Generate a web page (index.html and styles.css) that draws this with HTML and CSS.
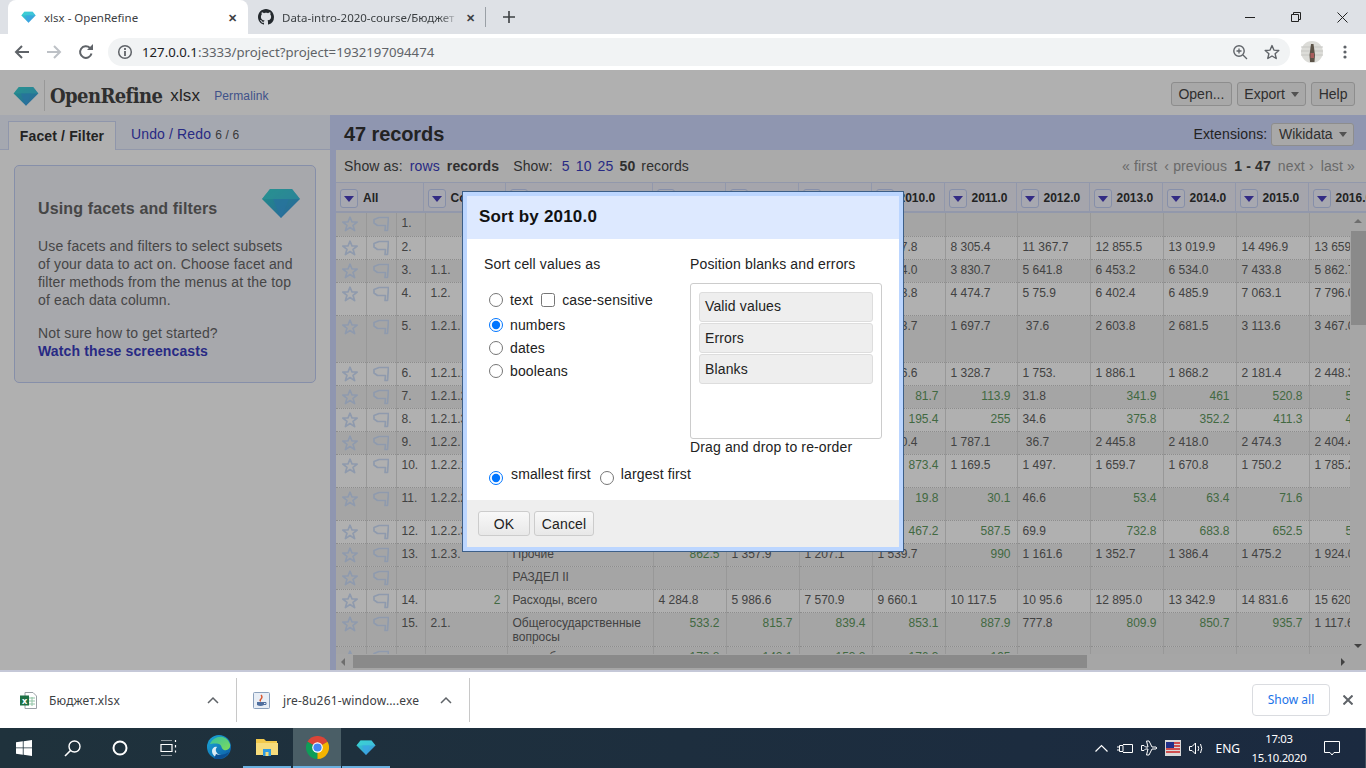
FILE: index.html
```html
<!DOCTYPE html>
<html lang="en">
<head>
    <meta charset="UTF-8">
    <meta name="viewport" content="width=device-width, initial-scale=1.0">
    <title>xlsx - OpenRefine</title>
    <link rel="stylesheet" href="styles.css">
</head>
<body>

<svg class="defs" aria-hidden="true">
    <defs>
        <linearGradient id="gem-a" x1="0" y1="0" x2="1" y2="1">
            <stop offset="0" stop-color="#2fd0c4"/>
            <stop offset="1" stop-color="#3f8fe6"/>
        </linearGradient>
        <symbol id="gem" viewBox="0 0 40 30">
            <path d="M9 1H31L39 11L20 30L1 11Z" fill="url(#gem-a)"/>
            <path d="M1 11H39L31 1H9Z" fill="#43d6dc" opacity=".55"/>
            <path d="M12 11H28L20 30Z" fill="#3aa5e6" opacity=".7"/>
        </symbol>
        <symbol id="star" viewBox="0 0 16 16">
            <path d="M8 1.200L10 6H15.200L11 9.300L12.600 14.600L8 11.500L3.400 14.600L5 9.300L.8 6H6Z" fill="none" stroke="#cfe0fb" stroke-width="1.700" stroke-linejoin="round"/>
        </symbol>
        <symbol id="flag" viewBox="0 0 16 16">
            <path d="M1 3.500L6 1.500H15.500L14.500 14.500H12L12.500 9.500H4.500L1 7Z" fill="none" stroke="#cfe0fb" stroke-width="1.700" stroke-linejoin="round"/>
        </symbol>
    </defs>
</svg>

<div class="tabstrip">
    <div class="tab active">
        <svg class="tab-icon" width="15" height="12"><use href="#gem"/></svg>
        <span class="tab-title">xlsx - OpenRefine</span>
        <span class="tab-close">✕</span>
    </div>
    <div class="tab">
        <svg class="tab-icon" width="16" height="16" viewBox="0 0 16 16"><path fill="#24292e" d="M8 0C3.58 0 0 3.58 0 8c0 3.54 2.29 6.53 5.47 7.59.4.07.55-.27.55-.38 0-.19-.01-.82-.01-1.49-2.01.37-2.53-.49-2.69-.94-.09-.23-.48-.94-.82-1.13-.28-.15-.68-.52-.01-.53.63-.01 1.08.58 1.23.82.72 1.21 1.87.87 2.33.66.07-.52.28-.87.51-1.07-1.78-.2-3.64-.89-3.64-3.95 0-.87.31-1.59.82-2.15-.08-.2-.36-1.02.08-2.12 0 0 .67-.21 2.2.82.64-.18 1.32-.27 2-.27.68 0 1.36.09 2 .27 1.53-1.04 2.2-.82 2.2-.82.44 1.1.16 1.92.08 2.12.51.56.82 1.27.82 2.15 0 3.07-1.87 3.75-3.65 3.95.29.25.54.73.54 1.48 0 1.07-.01 1.93-.01 2.2 0 .21.15.46.55.38A8.013 8.013 0 0016 8c0-4.42-3.58-8-8-8z"/></svg>
        <span class="tab-title fade">Data-intro-2020-course/Бюджет</span>
        <span class="tab-close">✕</span>
    </div>
    <span class="tab-sep"></span>
    <svg class="new-tab" width="12" height="12" viewBox="0 0 12 12"><path d="M6 0V12M0 6H12" stroke="#3c4043" stroke-width="1.6"/></svg>
    <div class="win-controls">
        <svg width="10" height="10" viewBox="0 0 10 10"><path d="M0 5.5H10" stroke="#222" stroke-width="1"/></svg>
        <svg width="10" height="10" viewBox="0 0 10 10"><path d="M.5 2.5H7.5V9.5H.5ZM2.5 2.5V.5H9.5V7.5H7.5" fill="none" stroke="#222"/></svg>
        <svg width="11" height="11" viewBox="0 0 11 11"><path d="M.5 .5L10.5 10.5M10.5 .5L.5 10.5" stroke="#222"/></svg>
    </div>
</div>

<div class="toolbar">
    <svg class="nav" width="16" height="16" viewBox="0 0 16 16"><path d="M15 8H2M8 2L2 8L8 14" fill="none" stroke="#5f6368" stroke-width="2"/></svg>
    <svg class="nav" width="16" height="16" viewBox="0 0 16 16"><path d="M1 8H14M8 2L14 8L8 14" fill="none" stroke="#bdc1c6" stroke-width="2"/></svg>
    <svg class="nav" width="16" height="16" viewBox="0 0 16 16"><path d="M13.5 9.5A5.8 5.8 0 1 1 12 4" fill="none" stroke="#5f6368" stroke-width="2"/><path d="M9 6H15V0Z" fill="#5f6368"/></svg>
    <div class="omnibox">
        <svg width="16" height="16" viewBox="0 0 16 16"><circle cx="8" cy="8" r="6.3" fill="none" stroke="#5f6368" stroke-width="1.5"/><path d="M8 7V12M8 4V6" stroke="#5f6368" stroke-width="1.8"/></svg>
        <span class="url"><span class="host">127.0.0.1</span>:3333/project?project=1932197094474</span>
        <svg class="omni-right" width="16" height="16" viewBox="0 0 16 16"><circle cx="7" cy="7" r="5.2" fill="none" stroke="#5f6368" stroke-width="1.4"/><path d="M11 11L15 15M7 4.5V9.5M4.5 7H9.5" stroke="#5f6368" stroke-width="1.3"/></svg>
        <svg width="16" height="16" viewBox="0 0 16 16"><path d="M8 1.6L9.9 6.1L14.8 6.5L11.1 9.7L12.2 14.5L8 12L3.8 14.5L4.9 9.7L1.2 6.5L6.1 6.1Z" fill="none" stroke="#5f6368" stroke-width="1.4" stroke-linejoin="round"/></svg>
    </div>
    <svg class="avatar" width="22" height="22" viewBox="0 0 22 22"><circle cx="11" cy="11" r="11" fill="#dcdcd8"/><path d="M0 6H22M0 10H22M0 14H22" stroke="#c6c6c2"/><path d="M10 3H12.500L14 14L13.500 21H9L8.500 14Z" fill="#5c5348"/><path d="M9.500 12H13V17H9.500Z" fill="#a85c5c"/></svg>
    <svg class="kebab" width="4" height="16" viewBox="0 0 4 16"><circle cx="2" cy="3" r="1.600" fill="#5f6368"/><circle cx="2" cy="8" r="1.600" fill="#5f6368"/><circle cx="2" cy="13" r="1.600" fill="#5f6368"/></svg>
</div>

<div class="app">
    <header class="app-header">
        <svg class="logo" width="26" height="20"><use href="#gem"/></svg>
        <span class="logo-sep"></span>
        <span class="logo-text">OpenRefine</span>
        <span class="project-name">xlsx</span>
        <a class="permalink">Permalink</a>
        <div class="header-buttons">
            <span class="btn">Open...</span>
            <span class="btn">Export <i class="caret"></i></span>
            <span class="btn">Help</span>
        </div>
    </header>

    <div class="workspace">
        <aside class="left-panel">
            <div class="left-tabs">
                <span class="left-tab">Facet / Filter</span>
                <a class="left-link">Undo / Redo <small>6 / 6</small></a>
            </div>
            <div class="left-body">
                <div class="help-card">
                    <svg class="help-gem" width="40" height="30"><use href="#gem"/></svg>
                    <h2>Using facets and filters</h2>
                    <p>Use facets and filters to select subsets<br>of your data to act on. Choose facet and<br>filter methods from the menus at the top<br>of each data column.</p>
                    <p class="started">Not sure how to get started?<br><a>Watch these screencasts</a></p>
                </div>
            </div>
        </aside>

        <main class="right-panel">
            <div class="summary-bar">
                <span class="record-count">47 records</span>
                <span class="extensions">Extensions: <span class="btn">Wikidata <i class="caret"></i></span></span>
            </div>
            <div class="data-area">
                <div class="view-bar">
                    <span class="view-label">Show as:</span>
                    <a class="view-rows">rows</a>
                    <b class="view-records">records</b>
                    <span class="view-show">Show:</span>
                    <a class="view-n">5</a><a class="view-n">10</a><a class="view-n">25</a><b class="view-n">50</b>
                    <span>records</span>
                    <div class="pager">
                        <span>« first</span><span>‹ previous</span><b>1 - 47</b><span>next ›</span><span>last »</span>
                    </div>
                </div>

                <table class="col-heads">
                    <colgroup><col class="w87"><col class="w82"><col class="w147"><col class="w73"><col class="w73"><col class="w73"><col class="w73"><col class="w72"><col class="w73"><col class="w73"><col class="w73"><col class="w73"><col class="w73"></colgroup>
                    <tr>
                        <th><i class="menu"></i>All</th>
                        <th><i class="menu"></i>Code</th>
                        <th><i class="menu"></i>Name</th>
                        <th><i class="menu"></i>2007.0</th>
                        <th><i class="menu"></i>2008.0</th>
                        <th><i class="menu"></i>2009.0</th>
                        <th><i class="menu"></i>2010.0</th>
                        <th><i class="menu"></i>2011.0</th>
                        <th><i class="menu"></i>2012.0</th>
                        <th><i class="menu"></i>2013.0</th>
                        <th><i class="menu"></i>2014.0</th>
                        <th><i class="menu"></i>2015.0</th>
                        <th><i class="menu"></i>2016.0</th>
                    </tr>
                </table>

                <div class="grid-wrap">
                    <div class="rows-clip">
                        <table class="rows">
                            <colgroup><col class="w30"><col class="w30"><col class="w29"><col class="w82"><col class="w146"><col class="w73"><col class="w73"><col class="w73"><col class="w73"><col class="w72"><col class="w73"><col class="w73"><col class="w73"><col class="w73"><col class="w73"></colgroup>
                            <tr class="odd"><td><svg><use href="#star"/></svg></td><td><svg><use href="#flag"/></svg></td><td>1.</td><td></td><td></td><td></td><td></td><td></td><td></td><td></td><td></td><td></td><td></td><td></td><td></td></tr>
                            <tr><td><svg><use href="#star"/></svg></td><td><svg><use href="#flag"/></svg></td><td>2.</td><td></td><td></td><td></td><td></td><td></td><td>9 737.8</td><td>8 305.4</td><td>11 367.7</td><td>12 855.5</td><td>13 019.9</td><td>14 496.9</td><td>13 659.3</td></tr>
                            <tr class="odd"><td><svg><use href="#star"/></svg></td><td><svg><use href="#flag"/></svg></td><td>3.</td><td>1.1.</td><td></td><td></td><td></td><td></td><td>4 284.0</td><td>3 830.7</td><td>5 641.8</td><td>6 453.2</td><td>6 534.0</td><td>7 433.8</td><td>5 862.7</td></tr>
                            <tr class="h33"><td><svg><use href="#star"/></svg></td><td><svg><use href="#flag"/></svg></td><td>4.</td><td>1.2.</td><td></td><td></td><td></td><td></td><td>3 453.8</td><td>4 474.7</td><td>5 75.9</td><td>6 402.4</td><td>6 485.9</td><td>7 063.1</td><td>7 796.0</td></tr>
                            <tr class="odd h47"><td><svg><use href="#star"/></svg></td><td><svg><use href="#flag"/></svg></td><td>5.</td><td>1.2.1.</td><td></td><td></td><td></td><td></td><td>1 403.7</td><td>1 697.7</td><td>&nbsp;37.6</td><td>2 603.8</td><td>2 681.5</td><td>3 113.6</td><td>3 467.0</td></tr>
                            <tr><td><svg><use href="#star"/></svg></td><td><svg><use href="#flag"/></svg></td><td>6.</td><td>1.2.1.1</td><td></td><td></td><td></td><td></td><td>1 146.6</td><td>1 328.7</td><td>1 753.</td><td>1 886.1</td><td>1 868.2</td><td>2 181.4</td><td>2 448.3</td></tr>
                            <tr class="odd"><td><svg><use href="#star"/></svg></td><td><svg><use href="#flag"/></svg></td><td>7.</td><td>1.2.1.2</td><td></td><td></td><td></td><td></td><td class="num">81.7</td><td class="num">113.9</td><td>31.8</td><td class="num">341.9</td><td class="num">461</td><td class="num">520.8</td><td class="num">588.2</td></tr>
                            <tr><td><svg><use href="#star"/></svg></td><td><svg><use href="#flag"/></svg></td><td>8.</td><td>1.2.1.3</td><td></td><td></td><td></td><td></td><td class="num">195.4</td><td class="num">255</td><td>34.6</td><td class="num">375.8</td><td class="num">352.2</td><td class="num">411.3</td><td class="num">476.1</td></tr>
                            <tr class="odd"><td><svg><use href="#star"/></svg></td><td><svg><use href="#flag"/></svg></td><td>9.</td><td>1.2.2.</td><td></td><td></td><td></td><td></td><td>1 500.4</td><td>1 787.1</td><td>&nbsp;36.7</td><td>2 445.8</td><td>2 418.0</td><td>2 474.3</td><td>2 404.4</td></tr>
                            <tr class="h33"><td><svg><use href="#star"/></svg></td><td><svg><use href="#flag"/></svg></td><td>10.</td><td>1.2.2.1</td><td></td><td></td><td></td><td></td><td class="num">873.4</td><td>1 169.5</td><td>1 497.</td><td>1 659.7</td><td>1 670.8</td><td>1 750.2</td><td>1 785.2</td></tr>
                            <tr class="odd h33"><td><svg><use href="#star"/></svg></td><td><svg><use href="#flag"/></svg></td><td>11.</td><td>1.2.2.2</td><td></td><td></td><td></td><td></td><td class="num">19.8</td><td class="num">30.1</td><td>46.6</td><td class="num">53.4</td><td class="num">63.4</td><td class="num">71.6</td><td></td></tr>
                            <tr><td><svg><use href="#star"/></svg></td><td><svg><use href="#flag"/></svg></td><td>12.</td><td>1.2.2.3</td><td></td><td></td><td></td><td></td><td class="num">467.2</td><td class="num">587.5</td><td>69.9</td><td class="num">732.8</td><td class="num">683.8</td><td class="num">652.5</td><td class="num">540.9</td></tr>
                            <tr class="odd"><td><svg><use href="#star"/></svg></td><td><svg><use href="#flag"/></svg></td><td>13.</td><td>1.2.3.</td><td>Прочие</td><td class="num">862.5</td><td>1 357.9</td><td>1 207.1</td><td>1 539.7</td><td class="num">990</td><td>1 161.6</td><td>1 352.7</td><td>1 386.4</td><td>1 475.2</td><td>1 924.0</td></tr>
                            <tr class="odd"><td><svg><use href="#star"/></svg></td><td><svg><use href="#flag"/></svg></td><td></td><td></td><td>РАЗДЕЛ II</td><td></td><td></td><td></td><td></td><td></td><td></td><td></td><td></td><td></td><td></td></tr>
                            <tr><td><svg><use href="#star"/></svg></td><td><svg><use href="#flag"/></svg></td><td>14.</td><td class="num">2</td><td>Расходы, всего</td><td>4 284.8</td><td>5 986.6</td><td>7 570.9</td><td>9 660.1</td><td>10 117.5</td><td>10 95.6</td><td>12 895.0</td><td>13 342.9</td><td>14 831.6</td><td>15 620.4</td></tr>
                            <tr class="odd h33"><td><svg><use href="#star"/></svg></td><td><svg><use href="#flag"/></svg></td><td>15.</td><td>2.1.</td><td>Общегосударственные вопросы</td><td class="num">533.2</td><td class="num">815.7</td><td class="num">839.4</td><td class="num">853.1</td><td class="num">887.9</td><td>777.8</td><td class="num">809.9</td><td class="num">850.7</td><td class="num">935.7</td><td>1 117.6</td></tr>
                            <tr class="odd"><td><svg><use href="#star"/></svg></td><td><svg><use href="#flag"/></svg></td><td></td><td></td><td>в т.ч. обслуживание</td><td class="num">172.8</td><td class="num">142.1</td><td class="num">153.2</td><td class="num">176.3</td><td class="num">195</td><td></td><td></td><td>нения</td><td></td><td></td></tr>
                        </table>
                    </div>
                    <div class="vscroll">
                        <i class="arrow up"></i>
                        <i class="vthumb"></i>
                        <i class="arrow down"></i>
                    </div>
                    <div class="hscroll">
                        <i class="arrow left"></i>
                        <i class="hthumb"></i>
                        <i class="arrow right"></i>
                    </div>
                </div>
            </div>
        </main>
    </div>

    <div class="overlay"></div>

    <div class="dialog">
        <h3 class="dialog-title">Sort by 2010.0</h3>
        <div class="dialog-body">
            <div class="sort-cols">
                <div class="sort-types">
                    <div class="sort-head">Sort cell values as</div>
                    <label class="opt opt-text"><input type="radio" name="valueType">text<input type="checkbox" class="case-box">case-sensitive</label>
                    <label class="opt opt-numbers"><input type="radio" name="valueType" checked>numbers</label>
                    <label class="opt"><input type="radio" name="valueType">dates</label>
                    <label class="opt"><input type="radio" name="valueType">booleans</label>
                </div>
                <div class="sort-order">
                    <div class="sort-head">Position blanks and errors</div>
                    <div class="order-box">
                        <div class="order-item">Valid values</div>
                        <div class="order-item">Errors</div>
                        <div class="order-item">Blanks</div>
                    </div>
                    <div class="order-hint">Drag and drop to re-order</div>
                </div>
            </div>
            <div class="direction">
                <input type="radio" name="dir" checked><span class="dir-small">smallest first</span>
                <input type="radio" name="dir"><span>largest first</span>
            </div>
        </div>
        <div class="dialog-footer">
            <button class="dlg-btn ok">OK</button>
            <button class="dlg-btn cancel">Cancel</button>
        </div>
    </div>
</div>

<div class="downloads">
    <div class="dl-item">
        <svg width="17" height="17" viewBox="0 0 17 17"><path d="M5 .5H13L16.500 4V16.500H5Z" fill="#fff" stroke="#9aa0a6"/><path d="M9 6H15M9 9H15M9 12H15M12 5V14" stroke="#8fc3a4"/><rect y="3.500" width="9" height="10" fill="#1e7145"/><text x="4.500" y="11.500" class="xl-mark">x</text></svg>
        <span class="dl-name">Бюджет.xlsx</span>
        <svg class="dl-caret" width="12" height="8" viewBox="0 0 12 8"><path d="M1 7L6 2L11 7" fill="none" stroke="#5f6368" stroke-width="1.500"/></svg>
    </div>
    <div class="dl-item java">
        <svg width="17" height="17" viewBox="0 0 17 17"><rect x=".5" y=".5" width="16" height="16" rx="1" fill="#e8eef6" stroke="#8aa0bc"/><path d="M4 10H11V13Q7.500 15 4 13Z" fill="#4f6f9f"/><path d="M8 3Q10 5 8 7T8 9" fill="none" stroke="#d9542b" stroke-width="1.300"/><path d="M11 10.500H13V12.500H11" fill="none" stroke="#4f6f9f"/></svg>
        <span class="dl-name">jre-8u261-window....exe</span>
        <svg class="dl-caret" width="12" height="8" viewBox="0 0 12 8"><path d="M1 7L6 2L11 7" fill="none" stroke="#5f6368" stroke-width="1.500"/></svg>
    </div>
    <span class="show-all">Show all</span>
    <svg class="dl-close" width="10" height="10" viewBox="0 0 10 10"><path d="M.5 .5L9.500 9.500M9.500 .5L.5 9.500" stroke="#5f6368" stroke-width="2"/></svg>
</div>

<div class="taskbar">
    <span class="task"><svg width="16" height="16" viewBox="0 0 16 16"><path fill="#fff" d="M0 2.300L6.800 1.300V7.500H0ZM7.600 1.200L16 0V7.500H7.600ZM0 8.300H6.800V14.700L0 13.700ZM7.600 8.300H16V16L7.600 14.800Z"/></svg></span>
    <span class="task"><svg width="17" height="17" viewBox="0 0 17 17"><circle cx="10.500" cy="6.500" r="5.500" fill="none" stroke="#fff" stroke-width="1.400"/><path d="M6.500 10.500L1 16" stroke="#fff" stroke-width="1.600"/></svg></span>
    <span class="task"><svg width="16" height="16" viewBox="0 0 16 16"><circle cx="8" cy="8" r="6.500" fill="none" stroke="#fff" stroke-width="2"/></svg></span>
    <span class="task"><svg width="17" height="16" viewBox="0 0 17 16"><path d="M1 0H12M1 16H12M1 4.500H12V11.500H1ZM15.500 0V2M15.500 5V7.500M15.500 10.500V12.500" fill="none" stroke="#fff" stroke-width="1.200"/></svg></span>
    <span class="task edge"><svg width="24" height="24" viewBox="0 0 24 24"><defs><linearGradient id="edge-a" x1="0" y1="0" x2="1" y2="1"><stop offset="0" stop-color="#1ba9d8"/><stop offset="1" stop-color="#0c59a4"/></linearGradient><linearGradient id="edge-b" x1="0" y1="0" x2="1" y2="1"><stop offset="0" stop-color="#35c1a0"/><stop offset="1" stop-color="#7fdc5a"/></linearGradient></defs><circle cx="12" cy="12" r="12" fill="url(#edge-a)"/><path d="M3 9C6 1 19-2 23 9C24 13 21 16 17 15C14 14 15 10 12 9C8 8 4 9 3 9Z" fill="url(#edge-b)"/><path d="M10 12C7 15 10 21 16 20C12 24 5 22 5 16C5 13 8 11 10 12Z" fill="#fff" opacity=".85"/><path d="M7 24C14 25 20 22 22 17C19 19 14 21 9 19Z" fill="#0b4f93"/></svg></span>
    <span class="task"><svg width="22" height="18" viewBox="0 0 22 18"><path d="M0 1H8L10 3H21V17H0Z" fill="#f2c94c"/><path d="M0 5H22V17H0Z" fill="#f7dc7c"/><path d="M7 11H15V18H7Z" fill="#2f9ae0"/><path d="M9.500 14H12.500V18H9.500Z" fill="#f7dc7c"/></svg></span>
    <span class="task chrome"><svg width="23" height="23" viewBox="0 0 24 24"><path d="M12 12L22.400 6A12 12 0 0 0 1.600 6Z" fill="#db4437"/><path d="M12 12L1.600 6A12 12 0 0 0 12 24Z" fill="#0f9d58"/><path d="M12 12L12 24A12 12 0 0 0 22.400 6Z" fill="#f4b400"/><circle cx="12" cy="12" r="5.500" fill="#fff"/><circle cx="12" cy="12" r="4.300" fill="#4285f4"/></svg></span>
    <span class="task gem"><svg width="20" height="15"><use href="#gem"/></svg></span>
    <div class="tray">
        <svg class="tray-caret" width="13" height="8" viewBox="0 0 13 8"><path d="M.5 7.500L6.500 1.500L12.500 7.500" fill="none" stroke="#fff" stroke-width="1.200"/></svg>
        <svg class="tray-plug" width="16" height="12" viewBox="0 0 16 12"><path d="M6 2.500H15.500V10.500H6M2.500 3.500H6V9.500H2.500ZM2.500 5H0M2.500 8H0" fill="none" stroke="#fff"/></svg>
        <svg class="tray-plane" width="17" height="16" viewBox="0 0 17 16"><path d="M.5 5.500H3L4.500 7H7L5.500 1H8L11 7H15Q16.500 8 15 9H11L8 15H5.500L7 9H4.500L3 10.500H.5Z" fill="none" stroke="#fff"/></svg>
        <svg class="tray-flag" width="16" height="16" viewBox="0 0 16 16"><rect width="16" height="16" fill="#d8d8d8"/><path d="M1 3H15M1 6H15M1 9H15M1 12H15" stroke="#c22" stroke-width="1.500"/><rect x="1" y="2" width="8" height="6" fill="#22308a"/></svg>
        <svg class="tray-sound" width="16" height="13" viewBox="0 0 16 13"><path d="M.5 4.500H3L6.500 1V12L3 8.500H.5Z M9 4Q10.500 6.500 9 9M11.500 2Q14 6.500 11.500 11" fill="none" stroke="#fff"/></svg>
        <span class="tray-lang">ENG</span>
        <span class="tray-clock">17:03<br>15.10.2020</span>
        <svg class="tray-note" width="16" height="15" viewBox="0 0 16 15"><path d="M.5 .5H15.500V11.500H10L8 14L6 11.500H.5Z" fill="none" stroke="#fff"/></svg>
    </div>
</div>

</body>
</html>
```
FILE: styles.css
```css
* {
    box-sizing: border-box;
}
html, body {
    margin: 0;
    height: 768px;
    overflow: hidden;
}
body {
    font-family: "Liberation Sans", Arial, sans-serif;
    background-color: #fff;
    color: #222;
    display: flex;
    flex-direction: column;
}
.defs {
    position: absolute;
    width: 0;
    height: 0;
}

/* browser chrome */
.tabstrip {
    height: 34px;
    flex: none;
    background-color: #dee1e6;
    display: flex;
    align-items: flex-end;
    padding-left: 8px;
    font-family: "Noto Sans", sans-serif;
    font-size: 11.5px;
    color: #3c4043;
}
.tab {
    width: 239px;
    height: 34px;
    display: flex;
    align-items: center;
    padding: 0 10px 0 12px;
}
.tab.active {
    width: 240px;
    background-color: #fff;
    border-radius: 8px 8px 0 0;
    padding-left: 13px;
}
.tab + .tab {
    width: 238px;
    padding-left: 10px;
    padding-right: 10px;
}
.tab-icon {
    flex: none;
    margin-right: 8px;
}
.tab-title {
    flex: 1;
    overflow: hidden;
    white-space: nowrap;
}
.tab-title.fade {
    -webkit-mask-image: linear-gradient(to right, #000 88%, transparent);
    mask-image: linear-gradient(to right, #000 88%, transparent);
}
.tab-close {
    font-size: 11px;
    font-weight: bold;
    margin-left: 6px;
    margin-right: 1px;
}
.tab-sep {
    width: 1px;
    height: 20px;
    background-color: #9aa0a6;
    margin: 0 0 7px -1px;
}
.new-tab {
    margin: 0 0 11px 17px;
}
.win-controls {
    margin-left: auto;
    align-self: center;
    display: flex;
    gap: 36px;
    margin-right: 18px;
    align-items: center;
}
.toolbar {
    height: 36px;
    flex: none;
    background-color: #fff;
    display: flex;
    align-items: center;
    padding-left: 14px;
}
.nav {
    margin-right: 16px;
}
.nav:nth-child(3) {
    margin-right: 14px;
}
.omnibox {
    width: 1182px;
    height: 28px;
    background-color: #f1f3f4;
    border-radius: 14px;
    display: flex;
    align-items: center;
    padding: 0 10px 0 9px;
    gap: 9px;
    font-family: "Noto Sans", sans-serif;
    font-size: 13.2px;
    color: #5f6368;
}
.host {
    color: #202124;
}
.omni-right {
    margin-left: auto;
    margin-right: 7px;
}
.avatar {
    margin-left: 11px;
}
.kebab {
    margin-left: 20px;
}

/* OpenRefine page */
.app {
    height: 600px;
    flex: none;
    position: relative;
    font-size: 14px;
    letter-spacing: .14px;
    color: #333;
    display: flex;
    flex-direction: column;
}
.app a {
    color: #3a3dc0;
}
.app-header {
    height: 45px;
    flex: none;
    background-color: #fff;
    display: flex;
    align-items: center;
    padding: 2px 11px 0 13px;
}
.logo, .logo-text, .project-name, .permalink {
    margin-top: 5px;
}
.logo-sep {
    width: 1px;
    height: 31px;
    background-color: #ddd;
    margin: 3px 5px 0;
}
.logo-text {
    font-family: "DejaVu Serif", "Liberation Serif", serif;
    font-stretch: condensed;
    font-weight: bold;
    font-size: 20px;
    letter-spacing: -.6px;
    color: #444;
}
.project-name {
    font-size: 17px;
    margin-left: 8px;
    color: #333;
}
.app .permalink {
    font-size: 12px;
    margin-left: 14px;
    color: #5d77c9;
}
.header-buttons {
    margin-left: auto;
    display: flex;
    gap: 5px;
}
.btn {
    display: inline-block;
    height: 24px;
    line-height: 22px;
    padding: 0 6.5px;
    border: 1px solid #ccc;
    border-radius: 3px;
    background-color: #f4f4f4;
    color: #444;
    font-size: 14px;
    letter-spacing: 0;
}
.caret {
    display: inline-block;
    border: 4px solid transparent;
    border-top: 5px solid #777;
    border-bottom: 0;
    margin: 0 0 2px 2px;
}
.workspace {
    flex: 1;
    display: flex;
    min-height: 0;
}
.left-panel {
    width: 330px;
    flex: none;
    display: flex;
    flex-direction: column;
}
.left-tabs {
    height: 35px;
    flex: none;
    background-color: #f0f3ff;
    border-bottom: 1px solid #d4dcf8;
    display: flex;
    align-items: flex-end;
    padding-left: 8px;
}
.left-tab {
    width: 108px;
    height: 29px;
    margin-bottom: -1px;
    background-color: #fff;
    border: 1px solid #d0daf8;
    border-bottom: 0;
    text-align: center;
    font-weight: bold;
    line-height: 28px;
}
.left-link {
    margin-left: 15px;
    line-height: 28px;
}
.left-link small {
    color: #555;
    font-size: 12px;
}
.left-body {
    flex: 1;
    background-color: #fff;
    padding: 15px 14px;
}
.help-card {
    height: 218px;
    background-color: #f2f3fa;
    border: 1px solid #c3cff5;
    border-radius: 5px;
    padding: 33px 20px 0 23px;
    line-height: 18px;
    color: #666;
    position: relative;
}
.help-gem {
    position: absolute;
    top: 22px;
    right: 14px;
}
.help-card h2 {
    margin: 0 0 18px;
    font-size: 16px;
    line-height: 20px;
    color: #666;
}
.help-card p {
    margin: 0;
}
.help-card .started {
    margin-top: 15px;
}
.help-card a {
    font-weight: bold;
}
.right-panel {
    flex: 1;
    min-width: 0;
    display: flex;
    flex-direction: column;
    background-color: #d0d9ff;
}
.summary-bar {
    height: 35px;
    flex: none;
    display: flex;
    align-items: center;
    justify-content: space-between;
    padding: 3px 12px 0 14px;
}
.record-count {
    font-size: 20px;
    font-weight: bold;
    letter-spacing: -.1px;
    color: #333;
}
.extensions .btn {
    height: 23px;
    line-height: 21px;
}
.data-area {
    flex: 1;
    min-height: 0;
    margin-left: 6px;
    background-color: #f6f6f6;
    display: flex;
    flex-direction: column;
}
.view-bar {
    height: 32px;
    flex: none;
    display: flex;
    align-items: center;
    padding: 0 11px 0 8px;
    color: #444;
}
.view-rows {
    margin-left: 7px;
}
.view-records {
    margin-left: 7px;
}
.view-show {
    margin-left: 14px;
    margin-right: 9px;
}
.view-n {
    margin-right: 6px;
}
.pager {
    margin-left: auto;
    display: flex;
    gap: 7px;
    color: #999;
}
.pager b {
    color: #444;
}
.col-heads, .rows {
    border-collapse: collapse;
    table-layout: fixed;
    letter-spacing: 0;
}
.col-heads {
    width: 1030px;
    height: 31px;
    flex: none;
    background-color: #eff0fa;
    border-top: 1px solid #d4dcf8;
    border-bottom: 2px solid #d4dcf8;
    font-size: 12px;
}
.col-heads th {
    padding: 2px 0 0 4px;
    text-align: left;
    white-space: nowrap;
    overflow: hidden;
    border-right: 1px solid #d4dcf8;
    color: #333;
}
.menu {
    display: inline-block;
    width: 18px;
    height: 19px;
    vertical-align: middle;
    margin-right: 5px;
    border: 1px solid #c3cff5;
    border-radius: 3px;
    background-color: #f2f4ff;
    position: relative;
}
.menu::after {
    content: "";
    position: absolute;
    left: 3px;
    top: 6px;
    border: 5px solid transparent;
    border-top: 6px solid #4a3fc0;
    border-bottom: 0;
}
.w30 { width: 30px; }
.w29 { width: 29px; }
.w72 { width: 72px; }
.w73 { width: 73px; }
.w82 { width: 82px; }
.w87 { width: 87px; }
.w146 { width: 146px; }
.w147 { width: 147px; }
.grid-wrap {
    flex: 1;
    min-height: 0;
    display: grid;
    grid-template-columns: 1014px 16px;
    grid-template-rows: 441px 16px;
}
.rows-clip {
    overflow: hidden;
    background-color: #fff;
}
.rows {
    width: 1030px;
    font-size: 12px;
    line-height: 14px;
    color: #606060;
}
.rows tr {
    height: 23px;
    border-bottom: 1px dotted #ccc;
    background-color: #fff;
}
.rows tr.odd {
    background-color: #f0f0f0;
}
.rows tr.h33 {
    height: 33px;
}
.rows tr.h47 {
    height: 47px;
}
.rows td {
    padding: 3px 6px 2px 5px;
    vertical-align: top;
    overflow: hidden;
    border-right: 1px solid #ddd;
}
.rows td:nth-child(-n+2) {
    padding: 3px 0 0 6px;
}
.rows svg {
    width: 16px;
    height: 16px;
    display: block;
}
.rows td.num {
    text-align: right;
    color: #5f985f;
}
.vscroll, .hscroll {
    background-color: #f1f1f1;
    position: relative;
}
.vscroll {
    grid-column: 2;
    grid-row: 1;
}
.hscroll {
    grid-column: 1 / span 2;
    grid-row: 2;
}
.vthumb, .hthumb {
    position: absolute;
    background-color: #c8c8c8;
}
.vthumb {
    left: 1px;
    right: 0;
    top: 18px;
    height: 94px;
}
.hthumb {
    left: 17px;
    width: 734px;
    top: 1px;
    bottom: 2px;
}
.arrow {
    position: absolute;
    border: 4px solid transparent;
}
.arrow.up {
    top: 6px;
    left: 4px;
    border-bottom: 4px solid #a0a0a0;
    border-top: 0;
}
.arrow.down {
    bottom: 6px;
    left: 4px;
    border-top: 4px solid #606060;
    border-bottom: 0;
}
.arrow.left {
    left: 5px;
    top: 4px;
    border-right: 4px solid #a0a0a0;
    border-left: 0;
}
.arrow.right {
    right: 21px;
    top: 4px;
    border-left: 4px solid #606060;
    border-right: 0;
}
.overlay {
    position: absolute;
    inset: 0;
    background-color: rgba(0, 0, 0, .31);
}

/* sort dialog */
.dialog {
    position: absolute;
    left: 463px;
    top: 122px;
    width: 440px;
    height: 359px;
    border: 4px solid #bcd6ff;
    box-shadow: 0 0 0 1px #3d5f88;
    background-color: #fff;
    color: #222;
    display: flex;
    flex-direction: column;
}
.dialog-title {
    height: 43px;
    flex: none;
    margin: 0;
    background-color: #dde9ff;
    padding: 0 12px;
    font-size: 17px;
    letter-spacing: .2px;
    line-height: 42px;
    color: #111;
}
.dialog-body {
    flex: 1;
    padding: 16px 17px 0;
}
.sort-cols {
    display: flex;
}
.sort-types {
    width: 206px;
}
.sort-head {
    line-height: 18px;
}
.opt {
    display: flex;
    align-items: center;
    height: 23px;
    padding-left: 5px;
}
.opt input {
    width: 14px;
    height: 14px;
    margin: 0 7px 0 0;
}
.opt-text {
    margin-top: 15px;
}
.opt-numbers {
    margin-top: 2px;
}
.opt .case-box {
    margin: 0 7px 0 8px;
}
.order-box {
    width: 192px;
    height: 156px;
    margin-top: 10px;
    border: 1px solid #ccc;
    border-radius: 3px;
    padding: 8px;
}
.order-item {
    height: 30px;
    margin-bottom: 1px;
    line-height: 28px;
    padding-left: 5px;
    background-color: #eee;
    border: 1px solid #ddd;
    border-radius: 3px;
}
.order-item:first-child {
    line-height: 27px;
}
.order-hint {
    line-height: 18px;
    margin-top: -1px;
}
.direction {
    display: flex;
    align-items: flex-start;
    height: 22px;
    padding-left: 5px;
    margin-top: 9px;
    line-height: 18px;
}
.direction input {
    width: 14px;
    height: 14px;
    margin: 6px 8px 0 0;
}
.direction .dir-small + input {
    margin-right: 7px;
}
.dir-small {
    margin-right: 9px;
}
.dialog-footer {
    height: 47px;
    flex: none;
    background-color: #eee;
    padding: 11px;
    display: flex;
    gap: 4px;
}
.dlg-btn {
    height: 25px;
    padding: 0;
    font-family: inherit;
    font-size: 14px;
    letter-spacing: inherit;
    color: #222;
    border: 1px solid #ccc;
    border-radius: 3px;
    background: linear-gradient(#f8f8f8, #e8e8e8);
}
.dlg-btn.ok {
    width: 52px;
}
.dlg-btn.cancel {
    width: 60px;
}

/* downloads bar */
.downloads {
    height: 58px;
    flex: none;
    background-color: #fff;
    border-top: 2px solid #c5c8d8;
    display: flex;
    align-items: center;
    font-family: "Noto Sans", sans-serif;
    font-size: 12px;
    color: #3c4043;
}
.dl-item {
    width: 237px;
    height: 44px;
    display: flex;
    align-items: center;
    padding-left: 20px;
    border-right: 1px solid #c8c8c8;
    position: relative;
}
.dl-item.java {
    width: 233px;
    padding-left: 16px;
}
.dl-name {
    margin-left: 12px;
    letter-spacing: .15px;
}
.java .dl-name {
    margin-left: 13px;
}
.dl-caret {
    position: absolute;
    right: 17px;
    top: 18px;
}
.show-all {
    margin-left: auto;
    width: 78px;
    height: 32px;
    line-height: 30px;
    text-align: center;
    color: #1a73e8;
    border: 1px solid #dadce0;
    border-radius: 4px;
}
.dl-close {
    margin: 0 13px;
}

/* windows taskbar */
.taskbar {
    height: 40px;
    flex: none;
    background: linear-gradient(to right, #1f323c, #1b2a40);
    display: flex;
    align-items: stretch;
    color: #fff;
    font-family: "Noto Sans", sans-serif;
    font-size: 12px;
}
.task {
    width: 48px;
    display: flex;
    align-items: center;
    justify-content: center;
}
.task.edge {
    margin-left: 3px;
}
.task.edge, .task.edge + .task, .task.gem {
    border-bottom: 2px solid transparent;
}
.task.edge + .task {
    border-bottom-color: #6ab0e0;
}
.task.chrome {
    margin-left: 2px;
    background-color: #4a5e66;
    border-bottom: 2px solid #6ab0e0;
}
.task.gem {
    margin-left: 1px;
    border-bottom-color: #6ab0e0;
}
.tray {
    margin-left: auto;
    display: flex;
    align-items: center;
    padding-right: 5px;
    border-right: 1px solid #41505f;
    height: 40px;
}
.tray-plug {
    margin-left: 9px;
}
.tray-plane {
    margin-left: 8px;
}
.tray-flag {
    margin-left: 7px;
}
.tray-sound {
    margin-left: 8px;
}
.tray-lang {
    margin-left: 10px;
}
.tray-clock {
    margin-left: 9px;
    width: 60px;
    text-align: center;
    font-size: 11.3px;
    letter-spacing: -.3px;
    line-height: 19px;
}
.tray-note {
    margin-left: 15px;
    margin-right: 20px;
}
.xl-mark {
    font-size: 9px;
    font-weight: bold;
    fill: #fff;
    text-anchor: middle;
}
```
